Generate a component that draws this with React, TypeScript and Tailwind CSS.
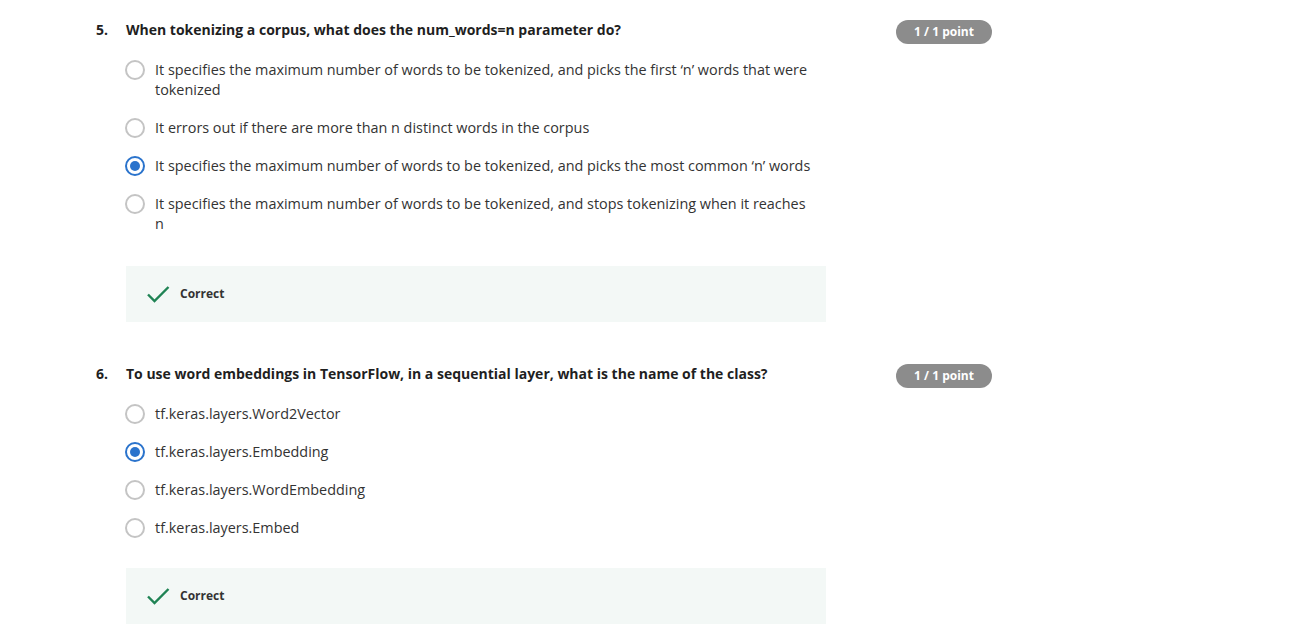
import React from "react";

type Q = {
  num: string;
  title: string;
  options: string[];
  selected: number;
};

const questions: Q[] = [
  {
    num: "5.",
    title: "When tokenizing a corpus, what does the num_words=n parameter do?",
    options: [
      "It specifies the maximum number of words to be tokenized, and picks the first \u2018n\u2019 words that were tokenized",
      "It errors out if there are more than n distinct words in the corpus",
      "It specifies the maximum number of words to be tokenized, and picks the most common \u2018n\u2019 words",
      "It specifies the maximum number of words to be tokenized, and stops tokenizing when it reaches n",
    ],
    selected: 2,
  },
  {
    num: "6.",
    title: "To use word embeddings in TensorFlow, in a sequential layer, what is the name of the class?",
    options: [
      "tf.keras.layers.Word2Vector",
      "tf.keras.layers.Embedding",
      "tf.keras.layers.WordEmbedding",
      "tf.keras.layers.Embed",
    ],
    selected: 1,
  },
];

function Radio({ checked }: { checked: boolean }) {
  return checked ? (
    <span className="flex h-5 w-5 shrink-0 items-center justify-center rounded-full border-2 border-[#2a73cc] bg-white">
      <span className="h-[10px] w-[10px] rounded-full bg-[#2a73cc]" />
    </span>
  ) : (
    <span className="h-5 w-5 shrink-0 rounded-full border-2 border-[#c4c4c4] bg-white" />
  );
}

function Question({ q, first }: { q: Q; first: boolean }) {
  return (
    <div className={first ? "" : "mt-[42px]"}>
      <div className="flex h-5 items-start">
        <div className="w-[30px] shrink-0 text-[14px] font-bold leading-5 text-[#1f1f1f]">{q.num}</div>
        <div className="w-[770px] shrink-0 text-[14px] font-bold leading-5 text-[#1f1f1f]">{q.title}</div>
        <div className="flex h-6 w-24 shrink-0 items-center justify-center rounded-full bg-[#8c8c8c] text-[12px] font-bold text-white">
          1 / 1 point
        </div>
      </div>
      <div className="ml-[29px] mt-5 flex flex-col gap-[18px]">
        {q.options.map((o, i) => (
          <div key={i} className="flex items-start">
            <Radio checked={i === q.selected} />
            <div className="ml-[10px] w-[660px] text-[14.4px] leading-5 text-[#333333]">{o}</div>
          </div>
        ))}
      </div>
      <div
        className={`ml-[30px] flex h-14 w-[700px] items-center bg-[#f3f8f6] pl-[21px] ${
          first ? "mt-8" : "mt-[30px]"
        }`}
      >
        <svg width="23" height="17" viewBox="0 0 23 17" fill="none">
          <path d="M1 8.5 L7.5 15 L21.5 1" stroke="#1f8354" strokeWidth="2.4" strokeLinecap="butt" strokeLinejoin="miter" />
        </svg>
        <span className="ml-[10px] text-[12px] font-bold text-[#333333]">Correct</span>
      </div>
    </div>
  );
}

export default function App() {
  return (
    <div
      className="min-h-[627px] bg-white pl-[96px] pt-[20px]"
      style={{ fontFamily: '"Open Sans", sans-serif' }}
    >
      {questions.map((q, i) => (
        <Question key={i} q={q} first={i === 0} />
      ))}
    </div>
  );
}
